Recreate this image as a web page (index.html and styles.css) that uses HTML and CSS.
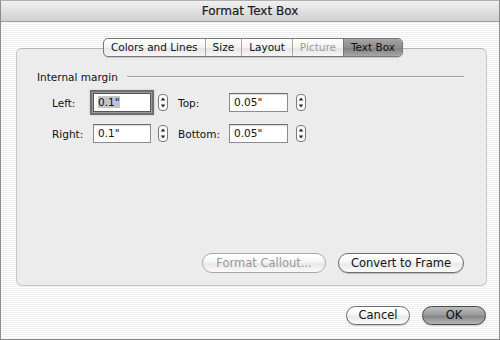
FILE: index.html
```html
<!DOCTYPE html>
<html>
<head>
<meta charset="utf-8">
<link rel="stylesheet" href="styles.css">
</head>
<body>
<div class="window">
  <div class="titlebar">Format Text Box</div>
  <div class="content">
    <div class="tabs">
      <div class="tab">Colors and Lines</div>
      <div class="tab">Size</div>
      <div class="tab">Layout</div>
      <div class="tab disabled">Picture</div>
      <div class="tab selected">Text Box</div>
    </div>
    <div class="panel">
      <div class="group-title"><span>Internal margin</span><span class="rule"></span></div>
      <div class="grid">
        <span class="lbl">Left:</span>
        <div class="field focused"><span class="sel">0.1"</span></div>
        <svg class="stepper" width="10" height="17" viewBox="0 0 10 17"><rect x="0.5" y="0.5" width="9" height="16" rx="3.5" fill="#fbfbfb" stroke="#7a7a7a"/><path d="M5 3.5 L7.2 6.5 H2.8 Z M5 13.5 L7.2 10.5 H2.8 Z" fill="#222"/></svg>
        <span class="lbl">Top:</span>
        <div class="field">0.05"</div>
        <svg class="stepper end" width="10" height="17" viewBox="0 0 10 17"><rect x="0.5" y="0.5" width="9" height="16" rx="3.5" fill="#fbfbfb" stroke="#7a7a7a"/><path d="M5 3.5 L7.2 6.5 H2.8 Z M5 13.5 L7.2 10.5 H2.8 Z" fill="#222"/></svg>

        <span class="lbl">Right:</span>
        <div class="field">0.1"</div>
        <svg class="stepper" width="10" height="17" viewBox="0 0 10 17"><rect x="0.5" y="0.5" width="9" height="16" rx="3.5" fill="#fbfbfb" stroke="#7a7a7a"/><path d="M5 3.5 L7.2 6.5 H2.8 Z M5 13.5 L7.2 10.5 H2.8 Z" fill="#222"/></svg>
        <span class="lbl">Bottom:</span>
        <div class="field">0.05"</div>
        <svg class="stepper end" width="10" height="17" viewBox="0 0 10 17"><rect x="0.5" y="0.5" width="9" height="16" rx="3.5" fill="#fbfbfb" stroke="#7a7a7a"/><path d="M5 3.5 L7.2 6.5 H2.8 Z M5 13.5 L7.2 10.5 H2.8 Z" fill="#222"/></svg>
      </div>
      <div class="panel-buttons">
        <div class="btn disabled wide1">Format Callout...</div>
        <div class="btn wide2">Convert to Frame</div>
      </div>
    </div>
    <div class="dialog-buttons">
      <div class="btn small">Cancel</div>
      <div class="btn small default">OK</div>
    </div>
  </div>
</div>
</body>
</html>
```

FILE: styles.css
```css
html, body {
  margin: 0;
  padding: 0;
  background: #fff;
}
body {
  width: 500px;
  height: 340px;
  font-family: "DejaVu Sans", sans-serif;
  font-size: 10.5px;
  color: #111;
}
.window {
  width: 500px;
  height: 340px;
  box-sizing: border-box;
  border: 1px solid #8c8c8c;
  border-top-color: #b0b0b0;
  display: flex;
  flex-direction: column;
  background: repeating-linear-gradient(to bottom, #ffffff 0 1px, #efefef 1px 2px);
}
.titlebar {
  height: 20px;
  flex: none;
  border-bottom: 1px solid #a0a0a0;
  background: linear-gradient(to bottom, #f0f0f0 0%, #e2e2e2 45%, #cfcfcf 100%);
  text-align: center;
  font-size: 12px;
  line-height: 20px;
  color: #1a1a1a;
  -webkit-text-stroke: 0.2px #1a1a1a;
}
.content {
  flex: 1;
  display: flex;
  flex-direction: column;
  padding: 16px 12px 0 15px;
}
.tabs {
  display: flex;
  align-self: center;
  margin-left: 3px;
  height: 17px;
  border: 1px solid #777;
  border-radius: 5px;
  overflow: hidden;
  position: relative;
  z-index: 1;
  background: linear-gradient(to bottom, #ffffff, #f2f2f2 50%, #e4e4e4 51%, #f6f6f6);
  box-shadow: 0 1px 1px rgba(0,0,0,0.15);
}
.tab {
  padding: 0 7px;
  line-height: 17px;
  border-left: 1px solid #a8a8a8;
  color: #111;
}
.tab:first-child { border-left: none; }
.tab.disabled { color: #9a9a9a; }
.tab.selected {
  background: linear-gradient(to bottom, #a4a4a4, #8e8e8e 50%, #7e7e7e 51%, #a6a6a6);
  color: #111;
  border-left-color: #777;
}
.panel {
  margin-top: -9px;
  height: 238px;
  box-sizing: border-box;
  border: 1px solid #c6c6c6;
  border-top-color: #b4b4b4;
  border-radius: 6px;
  background: #ececec;
  padding: 22px 22px 12px 20px;
  display: flex;
  flex-direction: column;
}
.group-title {
  display: flex;
  align-items: center;
  gap: 9px;
}
.rule {
  flex: 1;
  height: 1px;
  background: #9c9c9c;
  border-bottom: 1px solid #fafafa;
}
.grid {
  display: grid;
  grid-template-columns: 41px 58px 27px 51px 59px 18px;
  row-gap: 12px;
  align-items: center;
  margin-top: 10px;
  margin-left: 15px;
}
.stepper { margin-left: 7px; }
.stepper.end { margin-left: 8px; }
.field {
  height: 19px;
  box-sizing: border-box;
  border: 1px solid #8c8c8c;
  border-top-color: #6e6e6e;
  background: #fff;
  line-height: 17px;
  padding-left: 4px;
  box-shadow: inset 0 1px 1px rgba(0,0,0,0.15);
}
.field.focused {
  box-shadow: 0 0 0 1px #9a9a9a, 0 0 0 3px #6f6f6f, 0 0 2px 3px rgba(0,0,0,0.2);
  border-color: #555;
}
.sel {
  background: #c4c4c4;
}
.panel-buttons {
  margin-top: auto;
  display: flex;
  justify-content: flex-end;
  gap: 12px;
}
.btn {
  height: 20px;
  box-sizing: border-box;
  border: 1px solid #6d6d6d;
  border-radius: 10px;
  background: linear-gradient(to bottom, #ffffff 0%, #f7f7f7 45%, #e8e8e8 55%, #fbfbfb 100%);
  text-align: center;
  font-size: 11.5px;
  line-height: 18px;
  color: #111;
  box-shadow: 0 1px 1px rgba(0,0,0,0.2);
}
.btn.disabled {
  color: #999;
  border-color: #a8a8a8;
  box-shadow: none;
}
.wide1 { width: 124px; }
.wide2 { width: 126px; }
.dialog-buttons {
  margin-top: 20px;
  display: flex;
  justify-content: flex-end;
  gap: 12px;
  padding-right: 1px;
}
.btn.small { width: 64px; height: 19px; line-height: 17px; }
.btn.default {
  border-color: #4a4a4a;
  background: linear-gradient(to bottom, #bcbcbc 0%, #9c9c9c 45%, #878787 55%, #b6b6b6 100%);
}
```
